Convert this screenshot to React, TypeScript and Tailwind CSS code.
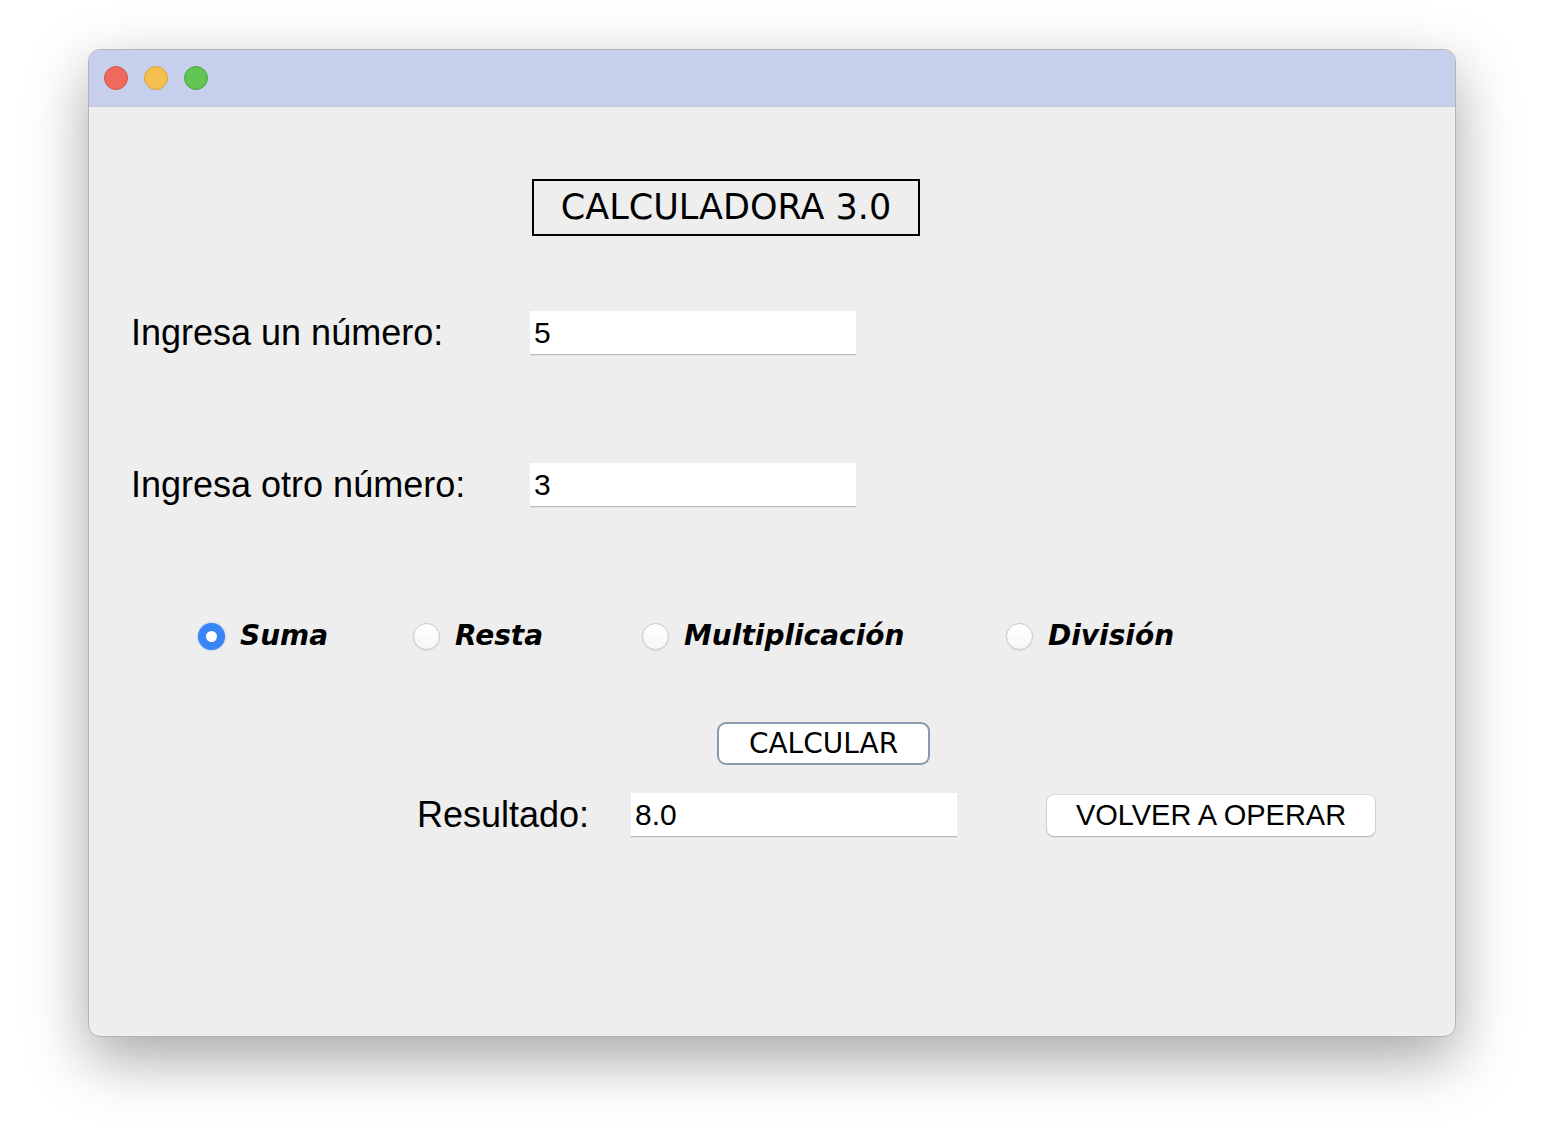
import React from 'react';

const sans = 'font-["Liberation_Sans",Arial,sans-serif]';
const lucida = 'font-["DejaVu_Sans","Liberation_Sans",sans-serif]';

const TextField: React.FC<{ value: string }> = ({ value }) => (
  <div className={`w-[326px] h-[44px] bg-white border-b border-[#bdbdbd] shadow-[0_1px_0_rgba(0,0,0,0.06)] flex items-center pl-[4px] text-[30px] leading-none text-black ${sans}`}>
    {value}
  </div>
);

const Radio: React.FC<{ label: string; checked?: boolean; width: string }> = ({ label, checked, width }) => (
  <div className={`flex items-center gap-[15px] ${width}`}>
    {checked ? (
      <div className="w-[27px] h-[27px] rounded-full bg-[#3a85f6] flex items-center justify-center shadow-[0_0_2px_rgba(59,130,246,0.6)]">
        <div className="w-[11px] h-[11px] rounded-full bg-white" />
      </div>
    ) : (
      <div className="w-[27px] h-[27px] rounded-full bg-gradient-to-b from-white to-[#f6f6f6] border border-[#c9c9c9] shadow-[0_1px_1px_rgba(0,0,0,0.08)]" />
    )}
    <span className={`text-[28px] leading-none font-bold italic text-black ${lucida}`}>{label}</span>
  </div>
);

export default function App() {
  return (
    <div className="w-[1548px] h-[1134px] bg-white pt-[49px] pl-[88px]">
      <div className="w-[1368px] h-[988px] rounded-[12px] overflow-hidden bg-[#eeeeee] border border-[#b4b4b4] shadow-[0_22px_60px_rgba(0,0,0,0.35)] flex flex-col">
        {/* title bar */}
        <div className="h-[57px] bg-[#c6d0ec] border-b border-[#c9c9c9] flex items-center gap-[16px] pl-[15px] shrink-0">
          <div className="w-[24px] h-[24px] rounded-full bg-[#ee6a5f] border border-[#d65448]" />
          <div className="w-[24px] h-[24px] rounded-full bg-[#f5bf50] border border-[#dea23a]" />
          <div className="w-[24px] h-[24px] rounded-full bg-[#61c454] border border-[#4ea73f]" />
        </div>

        {/* body */}
        <div className="flex flex-col">
          <div className="mt-[72px] ml-[443px] w-[388px] h-[57px] border-2 border-black flex items-center justify-center">
            <span className={`text-[35px] leading-none text-black ${lucida}`}>CALCULADORA 3.0</span>
          </div>

          <div className="mt-[75px] h-[44px] pl-[42px] flex items-center">
            <span className={`w-[399px] text-[36px] leading-none text-black ${sans}`}>Ingresa un número:</span>
            <TextField value="5" />
          </div>

          <div className="mt-[108px] h-[44px] pl-[42px] flex items-center">
            <span className={`w-[399px] text-[36px] leading-none text-black ${sans}`}>Ingresa otro número:</span>
            <TextField value="3" />
          </div>

          <div className="mt-[107px] pl-[109px] flex items-center h-[44px]">
            <Radio label="Suma" checked width="w-[215px]" />
            <Radio label="Resta" width="w-[229px]" />
            <Radio label="Multiplicación" width="w-[364px]" />
            <Radio label="División" width="w-[200px]" />
          </div>

          <div className="mt-[64px] ml-[628px] w-[213px] h-[43px] bg-white border-2 border-[#8a99ad] rounded-[9px] flex items-center justify-center">
            <span className={`text-[28px] leading-none text-black ${lucida}`}>CALCULAR</span>
          </div>

          <div className="mt-[28px] h-[44px] pl-[328px] flex items-center">
            <span className={`w-[214px] text-[36px] leading-none text-black ${sans}`}>Resultado:</span>
            <TextField value="8.0" />
            <div className={`ml-[90px] w-[328px] h-[41px] bg-white rounded-[7px] shadow-[0_0_0_1px_rgba(0,0,0,0.08),0_1px_2px_rgba(0,0,0,0.2)] flex items-center justify-center text-[29px] leading-none text-black ${sans}`}>
              VOLVER A OPERAR
            </div>
          </div>
        </div>
      </div>
    </div>
  );
}
